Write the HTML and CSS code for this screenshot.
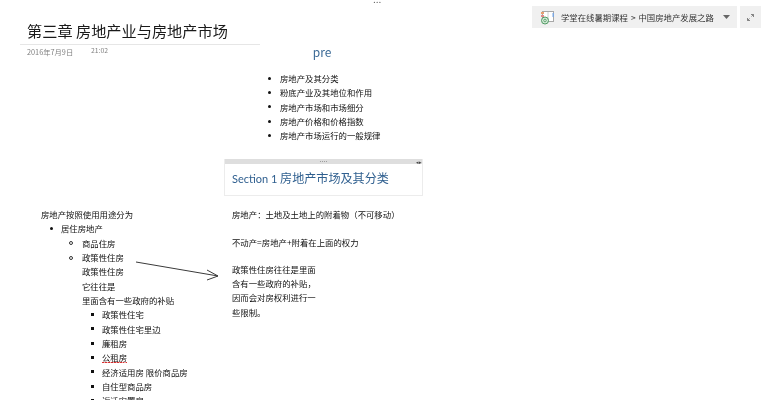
FILE: index.html
```html
<!DOCTYPE html>
<html lang="zh">
<head>
<meta charset="utf-8">
<title>第三章 房地产业与房地产市场</title>
<link rel="stylesheet" href="styles.css">
</head>
<body>
<main class="page">
  <div class="top-dots">...</div>
  <header class="page-title">
    <h1>第三章 房地产业与房地产市场</h1>
    <div class="stamp"><span class="date">2016年7月9日</span><span class="time">21:02</span></div>
  </header>

  <nav class="crumbs">
    <div class="crumb-bar">
      <svg class="nb-icon" width="15" height="15" viewBox="0 0 15 15" aria-hidden="true">
        <rect x="2.500" y="1.500" width="11" height="10" fill="#fff" stroke="#a8a8a8"/>
        <line x1="8" y1="2" x2="8" y2="11" stroke="#d0d0d0"/>
        <rect x="1" y="2" width="3" height="2" fill="#e8a070"/>
        <rect x="1" y="5" width="3" height="2" fill="#e08a8a"/>
        <rect x="12.500" y="3" width="1.500" height="4" fill="#7aa6e0"/>
        <circle cx="5" cy="10.500" r="3.500" fill="#d5ead8" stroke="#4f9a63"/>
        <circle cx="5" cy="10.500" r="1.300" fill="none" stroke="#4f9a63" stroke-width=".8"/>
      </svg>
      <span class="crumb-text">学堂在线暑期课程 &gt; 中国房地产发展之路</span>
      <svg class="caret" width="7" height="4" viewBox="0 0 7 4" aria-hidden="true"><path d="M0 0h7L3.500 4z" fill="#666"/></svg>
    </div>
    <div class="crumb-btn">
      <svg width="7" height="7" viewBox="0 0 7 7" aria-hidden="true"><path d="M4 .5h2.500V3M6.500 .5L4.500 2.500M3 6.500H.5V4M.5 6.500l2-2" fill="none" stroke="#777" stroke-width=".9"/></svg>
    </div>
  </nav>

  <section class="note note-pre">
    <p class="pre-title">pre</p>
    <ul class="list-disc">
      <li>房地产及其分类</li>
      <li>粉底产业及其地位和作用</li>
      <li>房地产市场和市场细分</li>
      <li>房地产价格和价格指数</li>
      <li>房地产市场运行的一般规律</li>
    </ul>
  </section>

  <section class="section-box">
    <div class="box-handle"><span class="handle-dots">....</span><span class="handle-arrows">◂▸</span></div>
    <h2><span class="latin">Section 1</span> 房地产市场及其分类</h2>
  </section>

  <section class="note note-left">
    <p>房地产按照使用用途分为</p>
    <ul class="list-disc">
      <li>居住房地产
        <ul class="list-circle">
          <li>商品住房</li>
          <li>政策性住房</li>
          <li class="plain">政策性住房</li>
          <li class="plain">它往往是</li>
          <li class="plain">里面含有一些政府的补贴
            <ul class="list-square">
              <li>政策性住宅</li>
              <li>政策性住宅里边</li>
              <li>廉租房</li>
              <li><span class="squiggle">公租房</span></li>
              <li>经济适用房 限价商品房</li>
              <li>自住型商品房</li>
              <li>近迁安置房</li>
            </ul>
          </li>
        </ul>
      </li>
    </ul>
  </section>

  <section class="note note-right">
    <p class="gap">房地产<span class="punct">：</span>土地及土地上的附着物<span class="punct">（</span>不可移动<span class="punct">）</span></p>
    <p class="gap">不动产=房地产+附着在上面的权力</p>
    <p>政策性住房往往是里面</p>
    <p>含有一些政府的补贴<span class="punct">，</span></p>
    <p>因而会对房权利进行一</p>
    <p>些限制。</p>
  </section>

  <svg class="ink-arrow" width="90" height="26" viewBox="0 0 90 26" aria-hidden="true">
    <path d="M1 2 L83 16 M72 10 L83 16 L72 20" fill="none" stroke="#3a3a3a" stroke-width="1"/>
  </svg>
</main>
</body>
</html>
```
FILE: styles.css
```css
html, body {
  margin: 0;
  padding: 0;
  background: #fff;
}
.page {
  position: relative;
  width: 764px;
  height: 400px;
  overflow: hidden;
  font-family: "Noto Sans CJK SC", "Noto Sans", sans-serif;
  font-size: 8.4px;
  line-height: 14.35px;
  color: #111;
  filter: blur(0.35px);
}
p, ul, h1, h2 { margin: 0; padding: 0; font-weight: 400; }
ul { list-style: none; }

.top-dots {
  position: absolute;
  left: 373px;
  top: -8px;
  font-size: 10px;
  color: #555;
}

.page-title {
  position: absolute;
  left: 20px;
  top: 19px;
  width: 240px;
}
.page-title h1 {
  padding: 0 0 0 7px;
  height: 25px;
  border-bottom: 1px solid #e6e6e6;
  font-size: 15.2px;
  line-height: 22px;
  color: #1a1a1a;
}
.stamp {
  position: relative;
  padding-left: 7px;
  font-size: 7.300px;
  line-height: 14px;
  color: #808080;
}
.stamp .time {
  position: absolute;
  left: 71px;
  top: -2px;
  font-size: 6.800px;
}

.crumbs {
  position: absolute;
  left: 532px;
  top: 6px;
  display: flex;
  gap: 3px;
}
.crumb-bar {
  width: 205px;
  height: 22px;
  box-sizing: border-box;
  padding-left: 8px;
  display: flex;
  align-items: center;
  background: #f0f0f0;
  color: #333;
}
.nb-icon { flex: none; }
.crumb-text { margin-left: 6px; white-space: nowrap; word-spacing: 1px; }
.caret { margin-left: 9px; flex: none; }
.crumb-btn {
  width: 21px;
  height: 22px;
  display: flex;
  align-items: center;
  justify-content: center;
  background: #f0f0f0;
}

.note { position: absolute; white-space: nowrap; }

.note-pre { left: 262px; top: 44px; width: 125px; }
.pre-title {
  width: 120px;
  text-align: center;
  font-size: 12px;
  line-height: 16px;
  color: #3b6a96;
  margin-bottom: 11px;
}

li { position: relative; }
li::before {
  content: "";
  position: absolute;
  top: 5.500px;
  box-sizing: border-box;
}
.plain::before { display: none; }
.list-disc { padding-left: 18px; }
.list-disc > li::before {
  left: -12.500px;
  width: 3px;
  height: 3px;
  border-radius: 50%;
  background: #111;
}
.list-circle { padding-left: 21px; }
.list-circle > li::before {
  left: -13px;
  width: 4px;
  height: 4px;
  border: 1px solid #333;
  border-radius: 50%;
}
.list-square { padding-left: 20px; }
.list-square > li::before {
  left: -11px;
  width: 3px;
  height: 3px;
  background: #111;
}

.section-box {
  position: absolute;
  left: 224px;
  top: 159px;
  width: 199px;
  height: 37px;
  box-sizing: border-box;
  border: 1px solid #ececec;
  border-top: 0;
}
.box-handle {
  position: relative;
  height: 5px;
  background: #dedede;
  text-align: center;
  font-size: 6px;
  line-height: 2px;
  letter-spacing: .3px;
  color: #444;
}
.handle-arrows {
  position: absolute;
  right: 1px;
  top: 1px;
  font-size: 5px;
  line-height: 4px;
  letter-spacing: -.5px;
}
.section-box h2 {
  padding: 5px 0 0 7px;
  font-size: 12.100px;
  line-height: 18px;
  color: #2f5f8f;
  white-space: nowrap;
}
.latin { font-family: Lato, sans-serif; font-size: 11px; }

.note-left { left: 41px; top: 207px; }
.note-left > .list-disc { padding-left: 20px; }
.note-left > .list-disc > li::before { left: -11px; }

.squiggle {
  background: repeating-linear-gradient(90deg, #d83030 0 1.500px, #f2a6a6 1.500px 3px) 0 95% / 100% 1px no-repeat;
}

.note-right { left: 232px; top: 207px; }
.note-right .gap { margin-bottom: 13.500px; }
.note-right p:nth-child(3) { margin-top: -1px; }
.punct { font-family: "Noto Sans CJK TC", sans-serif; }

.ink-arrow {
  position: absolute;
  left: 135px;
  top: 260px;
}
```
